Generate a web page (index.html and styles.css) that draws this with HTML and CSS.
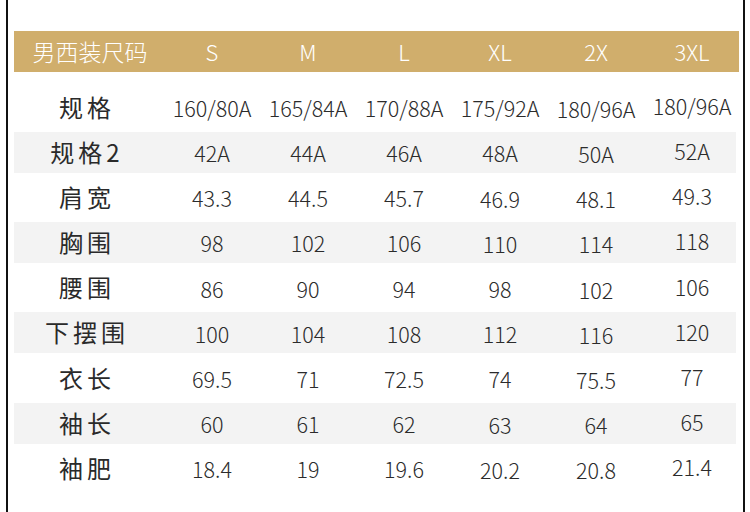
FILE: index.html
```html
<!DOCTYPE html>
<html lang="zh-CN">
<head>
<meta charset="utf-8">
<title>男西装尺码</title>
<link rel="stylesheet" href="styles.css">
</head>
<body>
<div class="page">
  <div class="table">
    <div class="head">
      <div class="hcell title">男西装尺码</div>
      <div class="hcell">S</div>
      <div class="hcell">M</div>
      <div class="hcell">L</div>
      <div class="hcell">XL</div>
      <div class="hcell">2X</div>
      <div class="hcell">3XL</div>
    </div>
    <div class="row">
      <div class="label">规格</div>
      <div class="val">160/80A</div><div class="val">165/84A</div><div class="val">170/88A</div><div class="val c4">175/92A</div><div class="val c5">180/96A</div><div class="val c6">180/96A</div>
    </div>
    <div class="row alt">
      <div class="label">规格2</div>
      <div class="val">42A</div><div class="val">44A</div><div class="val">46A</div><div class="val c4">48A</div><div class="val c5">50A</div><div class="val c6">52A</div>
    </div>
    <div class="row">
      <div class="label">肩宽</div>
      <div class="val">43.3</div><div class="val">44.5</div><div class="val">45.7</div><div class="val c4">46.9</div><div class="val c5">48.1</div><div class="val c6">49.3</div>
    </div>
    <div class="row alt">
      <div class="label">胸围</div>
      <div class="val">98</div><div class="val">102</div><div class="val">106</div><div class="val c4">110</div><div class="val c5">114</div><div class="val c6">118</div>
    </div>
    <div class="row">
      <div class="label">腰围</div>
      <div class="val">86</div><div class="val">90</div><div class="val">94</div><div class="val c4">98</div><div class="val c5">102</div><div class="val c6">106</div>
    </div>
    <div class="row alt">
      <div class="label">下摆围</div>
      <div class="val">100</div><div class="val">104</div><div class="val">108</div><div class="val c4">112</div><div class="val c5">116</div><div class="val c6">120</div>
    </div>
    <div class="row">
      <div class="label">衣长</div>
      <div class="val">69.5</div><div class="val">71</div><div class="val">72.5</div><div class="val c4">74</div><div class="val c5">75.5</div><div class="val c6">77</div>
    </div>
    <div class="row alt">
      <div class="label">袖长</div>
      <div class="val">60</div><div class="val">61</div><div class="val">62</div><div class="val c4">63</div><div class="val c5">64</div><div class="val c6">65</div>
    </div>
    <div class="row">
      <div class="label">袖肥</div>
      <div class="val">18.4</div><div class="val">19</div><div class="val">19.6</div><div class="val c4">20.2</div><div class="val c5">20.8</div><div class="val c6">21.4</div>
    </div>
  </div>
</div>
</body>
</html>
```

FILE: styles.css
```css
html, body {
  margin: 0;
  padding: 0;
  background: #ffffff;
}

body {
  font-family: "Noto Sans CJK SC", "Noto Sans", sans-serif;
  color: #222222;
}

.page {
  box-sizing: border-box;
  width: 739px;
  height: 512px;
  margin-left: 6px;
  border-left: 2px solid #111111;
  border-right: 2px solid #111111;
  padding: 31px 0 0 6px;
  overflow: hidden;
}

.table {
  width: 726px;
}

.head {
  display: grid;
  grid-template-columns: 150px repeat(6, 96px);
  height: 41px;
  background: #d0ae6c;
  color: #ffffff;
  margin-bottom: 12.5px;
  margin-right: 1px;
}

.hcell {
  display: flex;
  align-items: center;
  justify-content: center;
  font-size: 22px;
  font-weight: 300;
  line-height: 1;
  padding-bottom: 1px;
}

.hcell.title {
  font-size: 23px;
  padding-left: 2px;
}

.row {
  box-sizing: border-box;
  display: grid;
  grid-template-columns: 150px repeat(6, 96px);
  height: 45.2px;
  padding: 2px 0 2.2px 2px;
  margin-left: -2px;
  width: 724px;
  background-clip: content-box;
}

.row.alt {
  background-color: #f3f3f3;
}

.label {
  display: flex;
  align-items: center;
  justify-content: center;
  font-size: 24px;
  font-weight: 400;
  letter-spacing: 4px;
  color: #2a2a2a;
  padding-right: 4px;
  padding-bottom: 1px;
  line-height: 1;
}

.val {
  display: flex;
  align-items: center;
  justify-content: center;
  font-size: 21.5px;
  font-weight: 300;
  color: #2b2b2b;
  line-height: 1;
  padding-top: 1px;
}

.val.c4 {
  padding-top: 2px;
}

.val.c5 {
  padding-top: 3px;
}

.val.c6 {
  padding-top: 0;
  padding-bottom: 3px;
}
```
